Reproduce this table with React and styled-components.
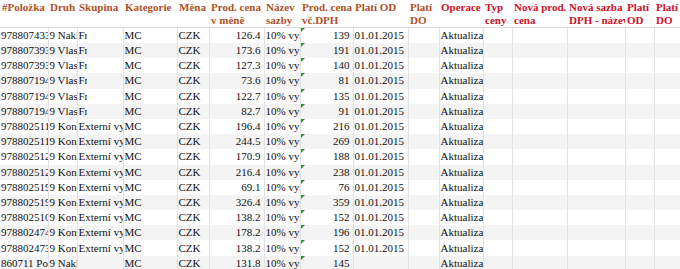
import React from "react";
import styled, { createGlobalStyle } from "styled-components";

const GlobalStyle = createGlobalStyle`
  body {
    margin: 0;
    background: #fff;
  }
`;

const columns = [
  { label: ["#Položka"], width: 48 },
  { label: ["Druh"], width: 29 },
  { label: ["Skupina"], width: 46 },
  { label: ["Kategorie"], width: 54 },
  { label: ["Měna"], width: 32 },
  { label: ["Prod. cena", "v měně"], width: 55 },
  { label: ["Název", "sazby"], width: 36 },
  { label: ["Prod. cena", "vč.DPH"], width: 53 },
  { label: ["Platí OD"], width: 55 },
  { label: ["Platí", "DO"], width: 31 },
  { label: ["Operace"], width: 44, red: true },
  { label: ["Typ", "ceny"], width: 29, red: true },
  { label: ["Nová prod.", "cena"], width: 55, red: true },
  { label: ["Nová sazba", "DPH - název"], width: 58, red: true },
  { label: ["Platí", "OD"], width: 29, red: true },
  { label: ["Platí", "DO"], width: 40, red: true },
];

const rows = [
  ["9788074331245", "9 Nakladatelství", "Fr", "126.4", "139", "01.01.2015"],
  ["9788073931221", "9 Vlastní", "Fr", "173.6", "191", "01.01.2015"],
  ["9788073931238", "9 Vlastní", "Fr", "127.3", "140", "01.01.2015"],
  ["9788071941024", "9 Vlastní", "Fr", "73.6", "81", "01.01.2015"],
  ["9788071941031", "9 Vlastní", "Fr", "122.7", "135", "01.01.2015"],
  ["9788071941048", "9 Vlastní", "Fr", "82.7", "91", "01.01.2015"],
  ["9788025111234", "9 Konsignace", "Externí vydavatel", "196.4", "216", "01.01.2015"],
  ["9788025111241", "9 Konsignace", "Externí vydavatel", "244.5", "269", "01.01.2015"],
  ["9788025121258", "9 Konsignace", "Externí vydavatel", "170.9", "188", "01.01.2015"],
  ["9788025121265", "9 Konsignace", "Externí vydavatel", "216.4", "238", "01.01.2015"],
  ["9788025191272", "9 Konsignace", "Externí vydavatel", "69.1", "76", "01.01.2015"],
  ["9788025191289", "9 Konsignace", "Externí vydavatel", "326.4", "359", "01.01.2015"],
  ["9788025101296", "9 Konsignace", "Externí vydavatel", "138.2", "152", "01.01.2015"],
  ["9788024741302", "9 Konsignace", "Externí vydavatel", "178.2", "196", "01.01.2015"],
  ["9788024731319", "9 Konsignace", "Externí vydavatel", "138.2", "152", "01.01.2015"],
  ["860711 Pohlednice", "9 Nakladatelství", "", "131.8", "145", ""],
];

const App = () => {
  return (
    <>
      <GlobalStyle />
      <Sheet>
        <colgroup>
          {columns.map((c, i) => (
            <col key={i} style={{ width: c.width }} />
          ))}
        </colgroup>
        <thead>
          <tr>
            {columns.map((c, i) => (
              <Head key={i} $red={c.red}>
                {c.label.map((line, j) => (
                  <div key={j}>{line}</div>
                ))}
              </Head>
            ))}
          </tr>
        </thead>
        <tbody>
          {rows.map((r, i) => (
            <Row key={i} $odd={i % 2 === 1}>
              <Cell>{r[0]}</Cell>
              <Cell>{r[1]}</Cell>
              <Cell>{r[2] === "Fr" ? <Clipped>Fr</Clipped> : r[2]}</Cell>
              <Cell>MC</Cell>
              <Cell>CZK</Cell>
              <Cell $right>{r[3]}</Cell>
              <Cell>10% vyšší</Cell>
              <Cell $right $flag>{r[4]}</Cell>
              <Cell>{r[5]}</Cell>
              <Cell />
              <Cell>Aktualizace</Cell>
              <Cell />
              <Cell />
              <Cell />
              <Cell />
              <Cell />
            </Row>
          ))}
        </tbody>
      </Sheet>
    </>
  );
};

const Sheet = styled.table`
  table-layout: fixed;
  width: 694px;
  border-collapse: collapse;
  border-spacing: 0;
  font-family: "Liberation Serif", "Times New Roman", serif;
  font-size: 11px;
  color: #111;
`;

const Head = styled.th`
  height: 27px;
  padding: 1px 0 0 2px;
  text-align: left;
  vertical-align: top;
  font-weight: bold;
  font-size: 11px;
  line-height: 13px;
  white-space: nowrap;
  overflow: hidden;
  color: ${(p) => (p.$red ? "#d0102a" : "#b0501e")};
  border-bottom: 1px solid #dcdcdc;
  box-sizing: border-box;
`;

const Row = styled.tr`
  height: 15.2px;
  background: ${(p) => (p.$odd ? "#f4f4f4" : "#fff")};
`;

const Cell = styled.td`
  position: relative;
  height: 15.2px;
  padding: 0 ${(p) => (p.$right ? "3px" : "0")} 0 1px;
  text-align: ${(p) => (p.$right ? "right" : "left")};
  white-space: nowrap;
  overflow: hidden;
  line-height: 15px;
  border-left: 1px solid #e2e2e2;
  box-sizing: border-box;

  &:first-child {
    border-left: none;
  }

  &::before {
    content: "";
    display: ${(p) => (p.$flag ? "block" : "none")};
    position: absolute;
    left: 0;
    top: 0;
    border-top: 4px solid #1f9a2f;
    border-right: 4px solid transparent;
  }
`;

const Clipped = styled.span`
  display: inline-block;
  width: 8px;
  overflow: hidden;
  vertical-align: top;
`;

export default App;
